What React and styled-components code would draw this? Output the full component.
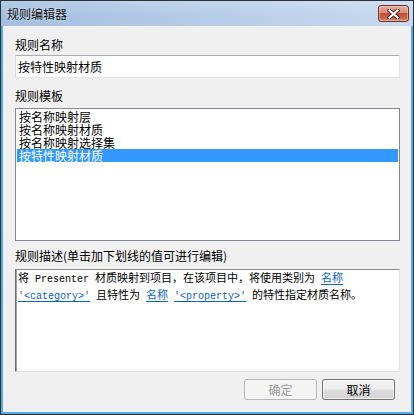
import React from "react";
import styled, { createGlobalStyle } from "styled-components";

const Global = createGlobalStyle`
  html, body { margin: 0; padding: 0; background: #f0f0f0; }
  body { font-family: "Noto Sans CJK SC", "Noto Sans", sans-serif; }
  * { box-sizing: border-box; }
`;

const Window = styled.div`
  width: 414px;
  height: 415px;
  display: flex;
  flex-direction: column;
  border: 1px solid #27323f;
  background: #53ace2;
`;

const TitleBar = styled.div`
  height: 25px;
  display: flex;
  align-items: center;
  justify-content: space-between;
  padding: 0 4px 0 6px;
  background:
    linear-gradient(180deg, rgba(255,255,255,0.18) 0%, rgba(255,255,255,0) 60%),
    linear-gradient(90deg, #a3bedf 0%, #b4cbe6 45%, #c8daef 100%);
`;

const Title = styled.span`
  font-size: 12px;
  line-height: 16px;
  color: #111;
  text-shadow: 0 0 4px rgba(255,255,255,0.6);
`;

const CloseButton = styled.div`
  width: 31px;
  height: 17px;
  display: flex;
  align-items: center;
  justify-content: center;
  border: 1px solid #6e3128;
  border-radius: 3px;
  background: linear-gradient(180deg, #e6aa9d 0%, #d98b79 45%, #c24f38 50%, #c9644a 80%, #dc8c6c 100%);
  box-shadow: inset 0 0 0 1px rgba(255,220,210,0.45);
`;

const Body = styled.div`
  flex: 1;
  margin: 0 2px 2px;
  background: #f0f0f0;
  display: flex;
  flex-direction: column;
  padding: 11px 11px 0 12px;
`;

const Field = styled.div`
  display: flex;
  flex-direction: column;
  margin-top: ${(p) => p.$top || 0}px;
`;

const Label = styled.div`
  font-size: 12px;
  line-height: 16px;
  color: #000;
  margin-bottom: ${(p) => p.$gap || 2}px;
  white-space: nowrap;
`;

const TextInput = styled.div`
  height: 23px;
  border: 1px solid #e2e6ec;
  border-top-color: #abadb3;
  border-left-color: #dbdfe6;
  background: #fff;
  padding: 0 2px;
  font-size: 12px;
  line-height: 21px;
  color: #000;
`;

const ListBox = styled.div`
  height: 133px;
  border: 1px solid #828790;
  background: #fff;
  padding: 1px 1px 1px 1px;
  display: flex;
  flex-direction: column;
`;

const ListItem = styled.div`
  height: 13px;
  line-height: 13px;
  font-size: 12px;
  padding-left: 2px;
  color: ${(p) => (p.$selected ? "#fff" : "#000")};
  background: ${(p) => (p.$selected ? "#3399ff" : "transparent")};
  white-space: nowrap;
`;

const DescBox = styled.div`
  height: 103px;
  border: 1px solid #e3e3e3;
  border-top-color: #8a8a8a;
  border-left-color: #6e6e6e;
  box-shadow: inset 1px 0 0 #a0a0a0;
  background: #fff;
  padding: 0 2px 0 2px;
  font-size: 11px;
  line-height: 15px;
  color: #000;
`;

const DescLine = styled.div`
  white-space: pre;
`;

const Mono = styled.span`
  font-family: "Liberation Mono", monospace;
  font-size: 10px;
`;

const Link = styled.span`
  color: #0b63c9;
  text-decoration: underline;
  text-decoration-color: #0b63c9;
  text-underline-offset: 2px;
  font-family: ${(p) => (p.$mono ? '"Liberation Mono", monospace' : "inherit")};
  font-size: ${(p) => (p.$mono ? "10px" : "inherit")};
`;

const ButtonRow = styled.div`
  display: flex;
  justify-content: flex-end;
  gap: 5px;
  margin-top: 7px;
  padding-right: 5px;
`;

const Button = styled.div`
  width: 73px;
  height: 21px;
  display: flex;
  align-items: center;
  justify-content: center;
  font-size: 12px;
  border-radius: 3px;
  border: 1px solid ${(p) => (p.$disabled ? "#b4b8bb" : "#707070")};
  color: ${(p) => (p.$disabled ? "#9a9a9a" : "#000")};
  background: ${(p) =>
    p.$disabled
      ? "#f4f4f4"
      : "linear-gradient(180deg, #f4f4f4 0%, #ececec 48%, #dedede 52%, #d2d2d2 100%)"};
  box-shadow: ${(p) => (p.$disabled ? "none" : "inset 0 0 0 1px rgba(255,255,255,0.7)")};
`;

export default function App() {
  return (
    <>
      <Global />
      <Window>
        <TitleBar>
          <Title>规则编辑器</Title>
          <CloseButton>
            <svg width="13" height="10" viewBox="0 0 13 10">
              <path d="M2.5 1.5 L10.5 8.5 M10.5 1.5 L2.5 8.5" stroke="#4a1e18" strokeWidth="4" strokeLinecap="square" fill="none" />
              <path d="M2.5 1.5 L10.5 8.5 M10.5 1.5 L2.5 8.5" stroke="#ffffff" strokeWidth="2.2" strokeLinecap="square" fill="none" />
            </svg>
          </CloseButton>
        </TitleBar>
        <Body>
          <Field>
            <Label>规则名称</Label>
            <TextInput>按特性映射材质</TextInput>
          </Field>
          <Field $top={10}>
            <Label $gap={4}>规则模板</Label>
            <ListBox>
              <ListItem>按名称映射层</ListItem>
              <ListItem>按名称映射材质</ListItem>
              <ListItem>按名称映射选择集</ListItem>
              <ListItem $selected>按特性映射材质</ListItem>
            </ListBox>
          </Field>
          <Field $top={7}>
            <Label $gap={5}>规则描述(单击加下划线的值可进行编辑)</Label>
            <DescBox>
              <DescLine>
                将<Mono> Presenter </Mono>材质映射到项目，在该项目中，将使用类别为<Mono> </Mono>
                <Link>名称</Link>
              </DescLine>
              <DescLine>
                <Link $mono>'&lt;category&gt;'</Link>
                <Mono> </Mono>且特性为<Mono> </Mono>
                <Link>名称</Link>
                <Mono> </Mono>
                <Link $mono>'&lt;property&gt;'</Link>
                <Mono> </Mono>的特性指定材质名称。
              </DescLine>
            </DescBox>
          </Field>
          <ButtonRow>
            <Button $disabled>确定</Button>
            <Button>取消</Button>
          </ButtonRow>
        </Body>
      </Window>
    </>
  );
}
